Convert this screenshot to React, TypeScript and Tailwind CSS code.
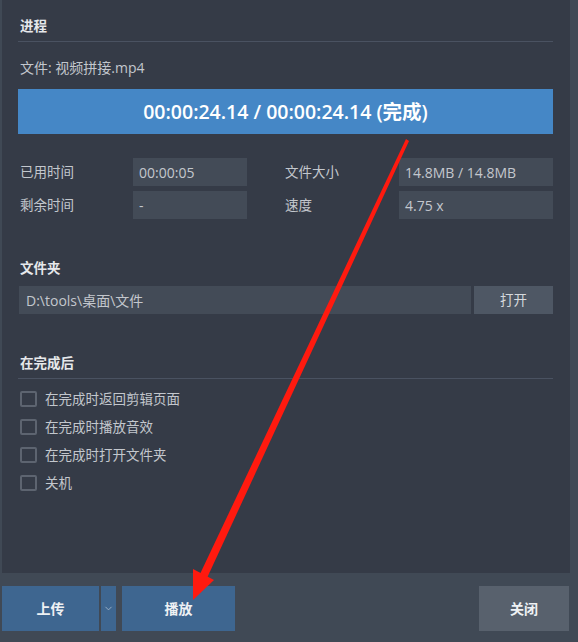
import { ChevronDown } from "lucide-react"

const font = { fontFamily: '"Open Sans", "Noto Sans CJK SC", sans-serif' }

function Stat({ label, value, labelW, boxW }: { label: string; value: string; labelW: string; boxW: string }) {
  return (
    <>
      <div className={`${labelW} text-[13.5px] text-[#c3c7cd] flex items-center`}>{label}</div>
      <div className={`${boxW} h-[28px] bg-[#434b57] px-[6px] flex items-center text-[14px] text-[#c3c7cd]`}>{value}</div>
    </>
  )
}

function Check({ label }: { label: string }) {
  return (
    <div className="h-[28px] flex items-center gap-[8px]">
      <span className="w-[17px] h-[16px] border-2 border-[#5d6470] rounded-[2px]" />
      <span className="text-[13.5px] text-[#c3c7cd]">{label}</span>
    </div>
  )
}

export default function App() {
  return (
    <div className="relative w-[578px] h-[642px] bg-[#404955] flex flex-col overflow-hidden" style={font}>
      <div className="ml-[2px] w-[568px] h-[573px] bg-[#353b47] pl-[16px] pr-[17px] pt-[16px] flex flex-col">
        <div className="h-[20px] leading-[20px] text-[13.5px] font-bold text-[#e6e8eb] pl-[2px]">进程</div>
        <div className="mt-[5px] h-px bg-[#4a5261]" />
        <div className="mt-[16px] h-[20px] leading-[20px] text-[14px] text-[#c3c7cd] pl-[2px]">文件: 视频拼接.mp4</div>
        <div className="mt-[11px] h-[45px] bg-[#4587c6] flex items-center justify-center text-[19.5px] font-semibold text-white">
          00:00:24.14 / 00:00:24.14 (完成)
        </div>

        <div className="mt-[24px] flex flex-col gap-[5px] pl-[2px]">
          <div className="flex">
            <Stat label="已用时间" value="00:00:05" labelW="w-[113px]" boxW="w-[114px]" />
            <div className="w-[38px]" />
            <Stat label="文件大小" value="14.8MB / 14.8MB" labelW="w-[114px]" boxW="w-[154px]" />
          </div>
          <div className="flex">
            <Stat label="剩余时间" value="-" labelW="w-[113px]" boxW="w-[114px]" />
            <div className="w-[38px]" />
            <Stat label="速度" value="4.75 x" labelW="w-[114px]" boxW="w-[154px]" />
          </div>
        </div>

        <div className="mt-[39px] h-[20px] leading-[20px] text-[13.5px] font-bold text-[#e6e8eb] pl-[2px]">文件夹</div>
        <div className="mt-[8px] flex gap-[3px] pl-[1px]">
          <div className="flex-1 h-[28px] bg-[#434b57] px-[7px] flex items-center text-[14px] text-[#c3c7cd]">D:\tools\桌面\文件</div>
          <button className="w-[79px] h-[28px] bg-[#4e5764] text-[13.5px] text-[#d6d9dd]">打开</button>
        </div>

        <div className="mt-[39px] h-[20px] leading-[20px] text-[13.5px] font-bold text-[#e6e8eb] pl-[2px]">在完成后</div>
        <div className="mt-[5px] h-px bg-[#4a5261]" />
        <div className="mt-[6px] flex flex-col pl-[2px]">
          <Check label="在完成时返回剪辑页面" />
          <Check label="在完成时播放音效" />
          <Check label="在完成时打开文件夹" />
          <Check label="关机" />
        </div>
      </div>

      <div className="flex-1 flex items-start pt-[13px] pl-[2px] pr-[9px]">
        <button className="w-[97px] h-[45px] bg-[#3e6690] text-[14px] font-bold text-[#eef1f4]">上传</button>
        <button className="ml-[2px] w-[15px] h-[45px] bg-[#3e6690] flex items-center justify-center text-[#9fb3c8]">
          <ChevronDown size={11} strokeWidth={2} />
        </button>
        <button className="ml-[6px] w-[113px] h-[45px] bg-[#3e6690] text-[14px] font-bold text-[#eef1f4]">播放</button>
        <div className="flex-1" />
        <button className="w-[90px] h-[45px] bg-[#58616d] text-[14px] font-bold text-[#eef1f4]">关闭</button>
      </div>

      {/* red annotation arrow */}
      <svg className="absolute inset-0 pointer-events-none" width="578" height="642" viewBox="0 0 578 642">
        <polygon points="406,139 409,141 207,578 200,574" fill="#ff1a0f" />
        <polygon points="193,600 193,569 214,580" fill="#ff1a0f" />
      </svg>
    </div>
  )
}
